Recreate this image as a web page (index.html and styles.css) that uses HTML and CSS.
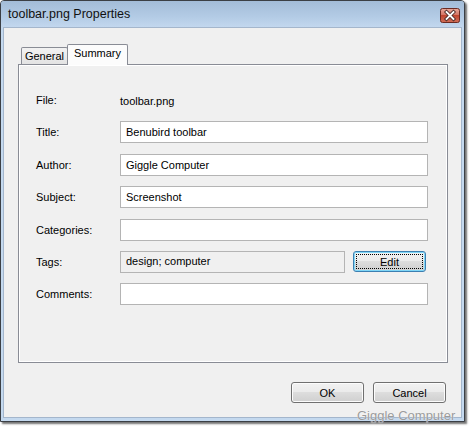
FILE: index.html
```html
<!DOCTYPE html>
<html lang="en">
<head>
  <meta charset="UTF-8">
  <title>toolbar.png Properties</title>
  <link rel="stylesheet" href="styles.css">
</head>
<body>

<div class="window">
  <div class="titlebar">
    <span class="title">toolbar.png Properties</span>
    <button class="close" title="Close">
      <svg width="20" height="15" viewBox="0 0 20 15">
        <defs>
          <linearGradient id="closeBg" x1="0" y1="0" x2="0" y2="1">
            <stop offset="0" stop-color="#e9a99c"/>
            <stop offset="0.5" stop-color="#d2705f"/>
            <stop offset="0.5" stop-color="#c0452f"/>
            <stop offset="1" stop-color="#d0705a"/>
          </linearGradient>
        </defs>
        <rect x="0.5" y="0.5" width="19" height="14" rx="2" fill="url(#closeBg)" stroke="#6b2b22"/>
        <path d="M6.5 4 L13.5 11 M13.5 4 L6.5 11" stroke="#4a2a26" stroke-width="3.6" stroke-linecap="square"/>
        <path d="M6.5 4 L13.5 11 M13.5 4 L6.5 11" stroke="#ffffff" stroke-width="1.8" stroke-linecap="square"/>
      </svg>
    </button>
  </div>

  <div class="client">
    <div class="tabs">
      <div class="tab">General</div>
      <div class="tab active">Summary</div>
    </div>

    <div class="panel">
      <div class="form">
        <span class="label">File:</span>
        <span class="value">toolbar.png</span>

        <span class="label">Title:</span>
        <div class="field">Benubird toolbar</div>

        <span class="label">Author:</span>
        <div class="field">Giggle Computer</div>

        <span class="label">Subject:</span>
        <div class="field">Screenshot</div>

        <span class="label">Categories:</span>
        <div class="field"></div>

        <span class="label">Tags:</span>
        <div class="tags-row">
          <div class="field readonly">design; computer</div>
          <button class="btn btn-edit">Edit</button>
        </div>

        <span class="label">Comments:</span>
        <div class="field"></div>
      </div>
    </div>

    <div class="actions">
      <button class="btn">OK</button>
      <button class="btn">Cancel</button>
    </div>
  </div>
</div>

<!-- watermark over the bottom edge -->
<div class="watermark">Giggle Computer</div>

</body>
</html>
```

FILE: styles.css
```css
body {
  margin: 0;
  min-height: 427px;
  background: #fff;
  font-family: "Liberation Sans", Arial, sans-serif;
  font-size: 11px;
  color: #000;
}

.window {
  position: relative;
  box-sizing: border-box;
  width: 465px;
  height: 422px;
  border: 1px solid #3b3f45;
  border-radius: 4px 4px 0 0;
  padding: 0 3px 3px;
  background: #c4d9ef;
  box-shadow: 2px 2px 2px rgba(0,0,0,0.55);
  display: flex;
  flex-direction: column;
}

.titlebar {
  height: 26px;
  margin: 0 -3px;
  padding: 0 4px 0 7px;
  display: flex;
  align-items: center;
  justify-content: space-between;
  background: linear-gradient(#a3bcd8, #b3cbe5 60%, #c2d7ee);
  border-radius: 3px 3px 0 0;
}

.title {
  font-size: 12.5px;
  color: #111;
  margin-top: -1px;
}

.close {
  width: 20px;
  height: 15px;
  padding: 0;
  border: none;
  background: none;
  margin-top: 2px;
}

.close svg { display: block; }

.client {
  flex: 1;
  background: #f0f0f0;
  padding: 16px 13px 0 14px;
  border: 1px solid #a4b6cc;
  margin: 0 -1px;
}

.tabs {
  display: flex;
  align-items: flex-end;
  height: 20px;
  padding-left: 3px;
}

.tab {
  box-sizing: border-box;
  width: 47px;
  height: 17px;
  padding-top: 2px;
  text-align: center;
  border: 1px solid #898c95;
  border-bottom: none;
  background: linear-gradient(#f2f2f2, #e3e3e3);
  border-radius: 2px 2px 0 0;
}

.tab.active {
  position: relative;
  z-index: 1;
  width: 61px;
  height: 21px;
  margin-bottom: -1px;
  margin-left: -1px;
  padding-top: 2px;
  background: #fcfcfc;
}

.panel {
  box-sizing: border-box;
  height: 299px;
  border: 1px solid #898c95;
  box-shadow: inset 1px 1px #fff, inset -1px -1px #fff;
  padding: 24px 18px 0 17px;
}

.form {
  display: grid;
  grid-template-columns: 84px 308px;
  grid-auto-rows: 22px;
  row-gap: 10.4px;
  align-items: center;
}

.value {
  padding-top: 1px;
}

.field {
  box-sizing: border-box;
  height: 22px;
  padding: 4px 5px 0;
  background: #fff;
  border: 1px solid #b4b4b4;
}

.field.readonly {
  background: #f0f0f0;
  padding-top: 3px;
}

.tags-row {
  display: flex;
  align-items: center;
  gap: 8px;
}

.tags-row .field {
  width: 225px;
}

.btn {
  position: relative;
  box-sizing: border-box;
  width: 73px;
  height: 21px;
  padding: 0;
  font-family: "Liberation Sans", Arial, sans-serif;
  font-size: 11px;
  color: #000;
  border: 1px solid #707070;
  border-radius: 3px;
  background: linear-gradient(#f2f2f2, #ebebeb 45%, #dddddd 50%, #cfcfcf);
  box-shadow: inset 0 0 0 1px #fcfcfc;
}

.btn-edit {
  border-color: #3c7fb1;
  box-shadow: inset 0 0 0 1px #7fd6f7;
}

.btn-edit::after {
  content: "";
  position: absolute;
  top: 2px; left: 2px; right: 2px; bottom: 2px;
  border: 1px dotted #000;
}

.actions {
  display: flex;
  justify-content: flex-end;
  gap: 9px;
  margin-top: 19px;
  padding-right: 2px;
}

.watermark {
  position: absolute;
  left: 357px;
  top: 408px;
  font-size: 13px;
  line-height: 15px;
  color: #9b9b9b;
  text-shadow: 0 0 1px #fff;
}
```
